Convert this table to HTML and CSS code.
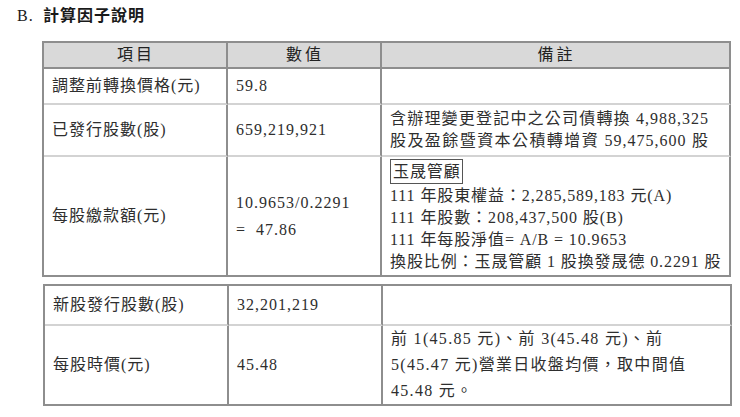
FILE: index.html
```html
<!DOCTYPE html>
<html lang="zh-Hant">
<head>
<meta charset="utf-8">
<title>計算因子說明</title>
<link rel="stylesheet" href="styles.css">
</head>
<body>
<h1 class="title"><span class="title-mark">B.</span>計算因子說明</h1>

<table class="factors first">
  <colgroup>
    <col class="c-item"><col class="c-value"><col class="c-note">
  </colgroup>
  <thead>
    <tr class="r-head">
      <th>項目</th><th>數值</th><th>備註</th>
    </tr>
  </thead>
  <tbody>
    <tr class="r-36">
      <td>調整前轉換價格(元)</td>
      <td>59.8</td>
      <td></td>
    </tr>
    <tr class="r-52">
      <td>已發行股數(股)</td>
      <td>659,219,921</td>
      <td class="note">
        <div class="jline">含辦理變更登記中之公司債轉換 4,988,325</div>
        <div class="jline">股及盈餘暨資本公積轉增資 59,475,600 股</div>
      </td>
    </tr>
    <tr class="r-120">
      <td>每股繳款額(元)</td>
      <td class="calc">10.9653/0.2291<br>=&nbsp; 47.86</td>
      <td class="detail">
        <div class="boxline"><span class="boxed">玉晟管顧</span></div>
        <div>111 年股東權益：2,285,589,183 元(A)</div>
        <div>111 年股數：208,437,500 股(B)</div>
        <div>111 年每股淨值= A/B = 10.9653</div>
        <div>換股比例：玉晟管顧 1 股換發晟德 0.2291 股</div>
      </td>
    </tr>
  </tbody>
</table>

<table class="factors second">
  <colgroup>
    <col class="c-item"><col class="c-value"><col class="c-note">
  </colgroup>
  <tbody>
    <tr class="r-40">
      <td>新股發行股數(股)</td>
      <td>32,201,219</td>
      <td></td>
    </tr>
    <tr class="r-80">
      <td>每股時價(元)</td>
      <td>45.48</td>
      <td class="loose">前 1(45.85 元)、前 3(45.48 元)、前<br>5(45.47 元)營業日收盤均價，取中間值<br>45.48 元。</td>
    </tr>
  </tbody>
</table>
</body>
</html>
```

FILE: styles.css
```css
html, body {
  margin: 0;
  padding: 0;
  background: #ffffff;
}

body {
  padding-top: 6px;
  font-family: "Liberation Serif", "Noto Sans CJK TC", serif;
  font-size: 16px;
  letter-spacing: 1px;
  color: #2e2e2e;
}

.title {
  margin: 0 0 15px 17px;
  font-size: 16px;
  line-height: 20px;
  font-weight: 700;
  color: #1a1a1a;
}

.title-mark {
  display: inline-block;
  width: 26px;
  font-weight: 400;
}

.factors {
  table-layout: fixed;
  border-collapse: separate;
  border-spacing: 0;
  border-top: 2px solid #8e8e8e;
  border-left: 2px solid #8e8e8e;
  width: 689px;
}

.factors.first {
  margin-left: 42px;
}

.factors.second {
  margin-left: 43px;
  margin-top: 7px;
}

.c-item { width: 184px; }
.c-value { width: 154px; }
.c-note { width: 349px; }

.factors th,
.factors td {
  box-sizing: border-box;
  padding: 0 6px 0 8px;
  border-right: 2px solid #8e8e8e;
  border-bottom: 2px solid #d3d3d3;
  vertical-align: middle;
  text-align: left;
  line-height: 22px;
  white-space: nowrap;
}

.factors th {
  background: #d9d9d9;
  font-weight: 400;
  text-align: center;
  border-bottom-color: #8e8e8e;
  letter-spacing: 3px;
  color: #222;
}

.factors tr:last-child td {
  border-bottom-color: #8e8e8e;
}

.r-head th { height: 26px; }
.r-36 td { height: 36px; }
.r-52 td { height: 52px; }
.r-120 td { height: 120px; }
.r-40 td { height: 40px; }
.r-80 td { height: 80px; }

.factors td.note {
  padding-right: 20px;
}

.jline {
  text-align: justify;
  text-align-last: justify;
}

.factors td.calc {
  line-height: 27px;
}

.factors td.detail {
  padding-right: 4px;
  letter-spacing: 0.9px;
}

.boxline {
  line-height: 26px;
}

.boxed {
  display: inline-block;
  border: 1px solid #555;
  padding: 0 1px 0 2px;
  line-height: 23px;
}

.factors td.loose {
  line-height: 26px;
  letter-spacing: 1.3px;
}
```
